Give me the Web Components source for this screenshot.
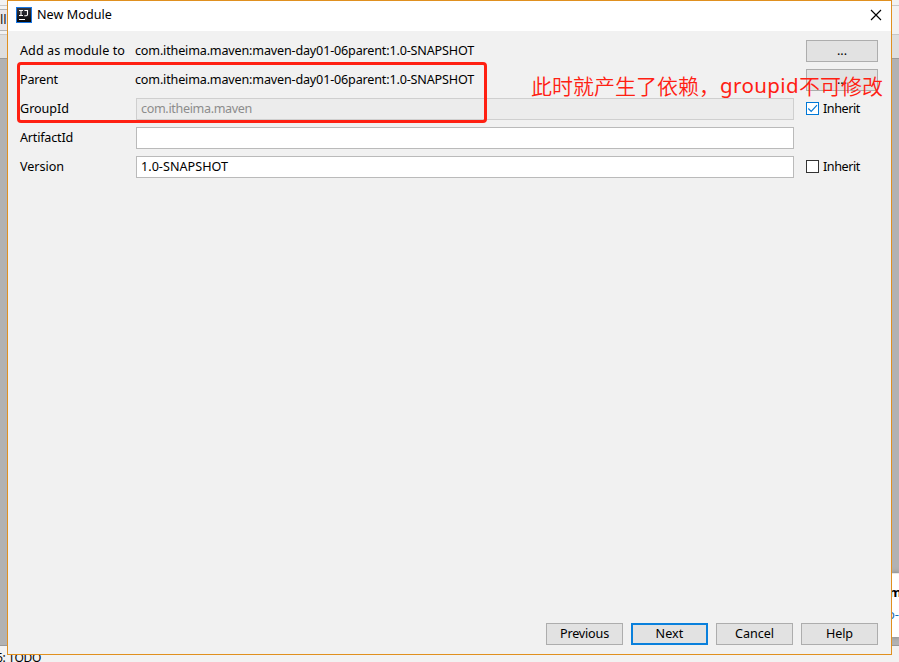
<!DOCTYPE html>
<html lang="zh">
<head>
<meta charset="utf-8">
<title>New Module</title>
<style>
html,body{margin:0;width:899px;height:662px;overflow:hidden;background:#f2f2f2}
body{font:12.6px/20px "Noto Sans","Noto Sans CJK SC",sans-serif;color:#000}
</style>
</head>
<body>
<module-screen></module-screen>
<script>
const define = (name, html, extra) => customElements.define(name, class extends HTMLElement {
  connectedCallback() {
    if (this.shadowRoot) return;
    const t = document.createElement('template');
    t.innerHTML = html;
    this.attachShadow({mode: 'open'}).append(t.content.cloneNode(true));
    if (extra) extra(this);
  }
});

// A run of text whose tracking is adjusted so that it spans the width in "w".
define('fit-text', `<style>:host{display:inline-block;white-space:pre}span{display:inline-block}</style><span><slot></slot></span>`, el => {
  const w = +el.getAttribute('w');
  const span = el.shadowRoot.querySelector('span');
  const n = el.textContent.length;
  const natural = span.getBoundingClientRect().width;
  const gap = (w - natural) / n;
  span.style.letterSpacing = gap + 'px';
  el.style.width = w + 'px';
});

define('push-button', `<style>
:host{display:flex;box-sizing:border-box;width:77px;height:22px;border:1px solid #adadad;background:#e2e2e2;justify-content:center;line-height:19px}
:host([primary]){border:2px solid #0a80dc;line-height:17px}
:host([wide]){width:72px}
</style><slot></slot>`);

define('text-field', `<style>
:host{display:block;box-sizing:border-box;height:22px;border:1px solid #bababa;background:#fff;padding-left:4px;line-height:19px}
:host([disabled]){background:#ececec;border-color:#cfcfcf;color:#8c8c8c}
</style><slot></slot>`);

define('check-box', `<style>
:host{display:flex;align-items:flex-start;height:22px;gap:4px;line-height:21px}
svg{display:block;width:13px;height:13px;flex:none;margin-top:4px}
path{display:none}
:host([checked]) path{display:block}
rect{stroke:#333}
:host([checked]) rect{stroke:#0078d7}
</style><svg viewBox="0 0 13 13"><rect x=".5" y=".5" width="12" height="12" fill="#fff"/><path d="M2.3 6.5 5.2 9.4 11 3.2" fill="none" stroke="#0078d7" stroke-width="1.15"/></svg><slot></slot>`);

define('form-row', `<style>
:host{display:grid;grid-template-columns:115px 1fr 72px;height:22px;line-height:21px}
.value{padding-right:12px}
</style><div><slot name="label"></slot></div><div class="value"><slot></slot></div><div><slot name="side"></slot></div>`);

define('title-bar', `<style>
:host{display:flex;height:30px;background:#fff;padding:0 9px 2px 8px;align-items:center;box-sizing:border-box}
svg{display:block}
.logo{margin-right:5px}
.close{margin-left:auto}
</style>
<svg class="logo" width="16" height="16" viewBox="0 0 16 16"><defs><linearGradient id="g" x2="0" y2="1"><stop stop-color="#343741"/><stop offset="1" stop-color="#07080a"/></linearGradient></defs><rect x=".5" y=".5" width="15" height="15" fill="url(#g)" stroke="#1876e4"/><path d="M3 3.5h4M5 3.5v5M3 8.5h4M8.4 3.5h3.1v4q0 1.2-1.3 1.2H8.3M3 12.5h6" fill="none" stroke="#fff" stroke-width="1.1"/></svg>
<slot></slot>
<svg class="close" width="12" height="12" viewBox="0 0 12 12"><path d="M1 1 11 11M11 1 1 11" stroke="#000" stroke-width="1.15"/></svg>`);

define('module-form', `<style>
:host{display:flex;flex-direction:column;gap:7px;padding:9px 13px 0 12px}
text-field{margin-left:1px}
</style>
<form-row><fit-text slot="label" w="105">Add as module to</fit-text><fit-text w="339">com.itheima.maven:maven-day01-06parent:1.0-SNAPSHOT</fit-text><push-button wide slot="side">...</push-button></form-row>
<form-row><fit-text slot="label" w="38">Parent</fit-text><fit-text w="339">com.itheima.maven:maven-day01-06parent:1.0-SNAPSHOT</fit-text><push-button wide slot="side">...</push-button></form-row>
<form-row><fit-text slot="label" w="49">GroupId</fit-text><text-field disabled><fit-text w="111">com.itheima.maven</fit-text></text-field><check-box checked slot="side"><fit-text w="37">Inherit</fit-text></check-box></form-row>
<form-row><fit-text slot="label" w="53">ArtifactId</fit-text><text-field></text-field></form-row>
<form-row><fit-text slot="label" w="44">Version</fit-text><text-field><fit-text w="87">1.0-SNAPSHOT</fit-text></text-field><check-box slot="side"><fit-text w="37">Inherit</fit-text></check-box></form-row>`);

define('button-bar', `<style>:host{display:flex;justify-content:flex-end;gap:8px;margin-top:auto;padding:0 13px 9px}</style>
<push-button><fit-text w="49">Previous</fit-text></push-button>
<push-button primary><fit-text w="28">Next</fit-text></push-button>
<push-button><fit-text w="39">Cancel</fit-text></push-button>
<push-button><fit-text w="27">Help</fit-text></push-button>`);

define('module-dialog', `<style>
:host{display:flex;flex-direction:column;box-sizing:border-box;width:885px;height:655px;border:1px solid #e0901f;background:#f1f1f1}
</style>
<title-bar><fit-text w="75">New Module</fit-text></title-bar>
<module-form></module-form>
<button-bar></button-bar>`);

// The slices of the IDE window that stay visible around the dialog.
define('ide-edge', `<style>
:host{display:flex;flex-direction:column;height:662px;width:7px;overflow:hidden;background:#f2f2f2}
div{box-sizing:border-box;flex:none;overflow:hidden;white-space:nowrap}
.menu{height:6px;border-bottom:1px solid #c8c8c8}
.tools{height:29px;border-bottom:1px solid #c8c8c8;padding-top:3px}
.tab{height:22px;border:1px solid #b5b5b5;border-width:1px 0;background:#e9e6ea;font-size:13px;line-height:19px;color:#222}
:host([right]) .tab{display:none}
.nav{height:24px;background:#dedede;border-bottom:1px solid #999}
.work{height:587px;background:#b2b2b2;border-bottom:1px solid #999;display:flex;flex-direction:column;justify-content:flex-end;padding-bottom:8px}
.pop{display:none;height:64px;background:#fff;border-top:1px solid #e8e8e8;box-shadow:0 0 5px #777;font-size:13px}
:host([right]) .pop{display:block}
.pop b{display:block;margin:7px 0 0 -3px;line-height:22px}
.pop span{display:block;color:#1670b8;line-height:22px;margin-left:-5px}
</style><div class="menu"></div><div class="tools"><div class="tab">ll</div></div><div class="nav"></div><div class="work"><div class="pop"><b>m</b><span>o-</span></div></div>`);

define('module-screen', `<style>
:host{display:flex;position:relative;width:899px;height:662px;overflow:hidden;background:#f2f2f2}
.frame{position:absolute;left:17px;top:62px;width:470px;height:61px;box-sizing:border-box;border:3px solid #ff2012;border-radius:4px}
.note{position:absolute;left:531px;top:70px;display:flex;align-items:center;font:21px/30px "Noto Sans CJK SC",sans-serif;font-weight:350;color:#ff2012;white-space:nowrap}
.latin{font-family:"Noto Sans";font-weight:400;font-size:20.5px}
.status{position:absolute;left:-4px;top:649px;font-size:12px;line-height:18px;z-index:0}
module-dialog{z-index:1}
.frame,.note{z-index:2}
</style>
<ide-edge></ide-edge><module-dialog></module-dialog><ide-edge right></ide-edge>
<fit-text class="status" w="45">6: TODO</fit-text>
<div class="frame"></div>
<div class="note"><fit-text w="189">此时就产生了依赖，</fit-text><fit-text class="latin" w="79">groupid</fit-text><fit-text w="84">不可修改</fit-text></div>`);
</script>
</body>
</html>
